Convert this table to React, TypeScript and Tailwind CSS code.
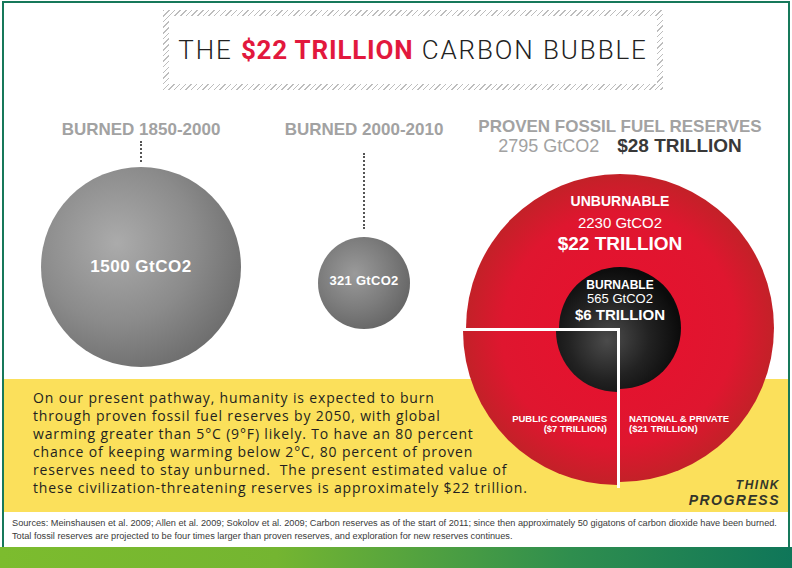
export default function App() {
  const yellowLines = [
    'On our present pathway, humanity is expected to burn',
    'through proven fossil fuel reserves by 2050, with global',
    'warming greater than 5°C (9°F) likely. To have an 80 percent',
    'chance of keeping warming below 2°C, 80 percent of proven',
    'reserves need to stay unburned.\u00a0 The present estimated value of',
    'these civilization-threatening reserves is approximately $22 trillion.',
  ];

  return (
    <div className="w-[792px] h-[568px] bg-white flex flex-col overflow-hidden font-['Liberation_Sans',Arial,sans-serif]">
      <div className="mt-[1px] ml-[2px] w-[788px] h-[546px] border-t-2 border-x-2 border-[#16785a] flex flex-col">
        {/* title */}
        <div className="pt-[7px] pl-[159px]">
          <div className="w-[500px] h-[80px] p-[6px] bg-[repeating-linear-gradient(135deg,#bdbdbd_0px,#bdbdbd_1px,transparent_1px,transparent_4px)]">
            <div className="h-full bg-white flex items-center justify-center">
              <h1 className="font-['Roboto',sans-serif] text-[26px] leading-none tracking-[1.9px] text-[#222] font-light whitespace-nowrap">
                THE <span className="font-bold tracking-[0.8px] text-[#e2183d]">$22 TRILLION</span> CARBON BUBBLE
              </h1>
            </div>
          </div>
        </div>

        {/* circles */}
        <div className="h-[289px] flex items-start">
          <div className="w-[274px] pt-[30px] flex flex-col items-center">
            <div className="text-[17px] leading-[20px] font-bold text-[#a2a2a2] whitespace-nowrap">BURNED 1850-2000</div>
            <div className="mt-[1px] h-[21px] border-l-2 border-dotted border-[#555]" />
            <div className="mt-[5px] w-[200px] h-[200px] rounded-full bg-[radial-gradient(circle_at_38%_38%,#ababab_0%,#8b8b8b_45%,#585858_100%)] flex items-center justify-center">
              <span className="text-white font-bold text-[17px] tracking-[0.5px]">1500 GtCO2</span>
            </div>
          </div>

          <div className="w-[172px] pt-[30px] flex flex-col items-center">
            <div className="text-[17px] leading-[20px] font-bold text-[#a2a2a2] whitespace-nowrap">BURNED 2000-2010</div>
            <div className="mt-[13px] h-[76px] border-l-2 border-dotted border-[#555]" />
            <div className="mt-[8px] w-[92px] h-[92px] rounded-full bg-[radial-gradient(circle_at_40%_40%,#9a9a9a_0%,#7c7c7c_45%,#545454_100%)] flex items-center justify-center pb-[5px]">
              <span className="text-white font-bold text-[13px] tracking-[0.3px] whitespace-nowrap">321 GtCO2</span>
            </div>
          </div>

          <div className="ml-[5px] w-[330px] pt-[27px] flex flex-col items-center relative z-10">
            <div className="text-[17px] leading-[19px] font-bold text-[#a2a2a2] whitespace-nowrap">PROVEN FOSSIL FUEL RESERVES</div>
            <div className="leading-[19px] whitespace-nowrap">
              <span className="text-[18px] text-[#a2a2a2]">2795 GtCO2</span>
              <span className="ml-[18px] text-[19px] font-bold text-[#383838]">$28 TRILLION</span>
            </div>
            <div className="mt-[12px] relative w-[330px] h-[330px]">
              <svg width="330" height="330" viewBox="0 0 330 330">
                <defs>
                  <radialGradient id="red" cx="50%" cy="50%" r="50%">
                    <stop offset="0" stopColor="#e8102e" />
                    <stop offset="0.75" stopColor="#df162f" />
                    <stop offset="1" stopColor="#c32128" />
                  </radialGradient>
                  <radialGradient id="blk" cx="42%" cy="58%" r="58%">
                    <stop offset="0" stopColor="#4b4b4b" />
                    <stop offset="0.55" stopColor="#222" />
                    <stop offset="1" stopColor="#0b0b0b" />
                  </radialGradient>
                  <clipPath id="rest">
                    <path d="M165 160 L0 160 L0 0 L330 0 L330 330 L165 330 Z" />
                  </clipPath>
                  <clipPath id="quad">
                    <rect x="0" y="160" width="165" height="170" />
                  </clipPath>
                </defs>
                <g clipPath="url(#rest)">
                  <circle cx="165" cy="160" r="154" fill="url(#red)" />
                  <circle cx="165" cy="160" r="61" fill="url(#blk)" />
                </g>
                <g transform="translate(-3,3)">
                  <g clipPath="url(#quad)">
                    <circle cx="165" cy="160" r="154" fill="url(#red)" />
                    <circle cx="165" cy="160" r="61" fill="url(#blk)" />
                  </g>
                </g>
                <path d="M6 161.5 H163.5 V320" stroke="#fff" strokeWidth="3" fill="none" />
              </svg>

              <div className="absolute top-[23px] inset-x-0 flex flex-col items-center text-white">
                <div className="text-[14px] leading-[21px] font-bold">UNBURNABLE</div>
                <div className="text-[15px] leading-[21px]">2230 GtCO2</div>
                <div className="text-[19px] leading-[21px] font-bold">$22 TRILLION</div>
                <div className="mt-[24px] text-[12px] leading-[14px] font-bold">BURNABLE</div>
                <div className="text-[13px] leading-[14px]">565 GtCO2</div>
                <div className="text-[15px] leading-[18px] font-bold">$6 TRILLION</div>
              </div>
              <div className="absolute top-[246px] left-0 w-[152px] text-right text-white text-[9.5px] leading-[10px] font-bold">
                <div>PUBLIC COMPANIES</div>
                <div>($7 TRILLION)</div>
              </div>
              <div className="absolute top-[246px] left-[174px] text-white text-[9.5px] leading-[10px] font-bold">
                <div>NATIONAL &amp; PRIVATE</div>
                <div>($21 TRILLION)</div>
              </div>
            </div>
          </div>
        </div>

        {/* yellow band */}
        <div className="h-[133px] bg-[#fbe05b] flex justify-between items-end">
          <p className="self-start pl-[29px] pt-[10px] font-['Open_Sans',sans-serif] text-[14px] leading-[18px] tracking-[0.85px] text-[#231f20] whitespace-nowrap">
            {yellowLines.map((l) => (
              <span key={l} className="block">{l}</span>
            ))}
          </p>
          <div className="pr-[8px] pb-[4px] flex flex-col items-end italic font-bold text-[#33352a]">
            <span className="text-[12px] leading-[14px] tracking-[1.5px]">THINK</span>
            <span className="text-[14px] leading-[16px] tracking-[1.5px]">PROGRESS</span>
          </div>
        </div>

        {/* sources */}
        <div className="flex-1 pl-[8px] pt-[5px] text-[9.2px] leading-[13px] text-[#3a3a3a] whitespace-nowrap">
          <div>Sources: Meinshausen et al. 2009; Allen et al. 2009; Sokolov et al. 2009; Carbon reserves as of the start of 2011; since then approximately 50 gigatons of carbon dioxide have been burned.</div>
          <div>Total fossil reserves are projected to be four times larger than proven reserves, and exploration for new reserves continues.</div>
        </div>
      </div>
      <div className="h-[21px] bg-[linear-gradient(90deg,#7cbc2e_0%,#74b531_35%,#2f8e4e_72%,#0f7659_100%)]" />
    </div>
  );
}
